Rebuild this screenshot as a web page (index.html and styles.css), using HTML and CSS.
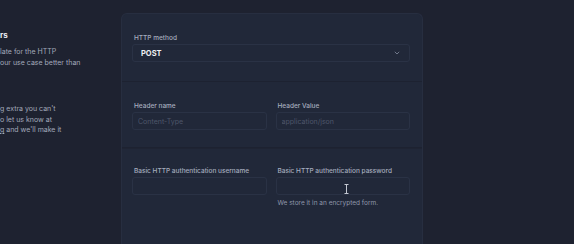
FILE: index.html
```html
<!DOCTYPE html>
<html lang="en">
<head>
    <meta charset="UTF-8">
    <meta name="viewport" content="width=device-width, initial-scale=1.0">
    <title>Webhook settings</title>
    <link rel="stylesheet" href="styles.css">
</head>
<body>

<div class="page">
    <div class="intro">
        <h3 class="intro-title">rs</h3>
        <p class="intro-text">
            <span class="line">late for the HTTP</span>
            <span class="line shift">our use case better than</span>
        </p>
        <p class="intro-text second">
            <span class="line">g extra you can't</span>
            <span class="line">o let us know at</span>
            <span class="line"><a class="mail" href="#">g</a> and we'll make it</span>
        </p>
    </div>

    <div class="panel">
        <div class="section first">
            <label class="field-label">HTTP method</label>
            <div class="select">
                <span class="select-value">POST</span>
                <svg class="chevron" width="6" height="4" viewBox="0 0 6 4">
                    <path d="M0.8 0.8 L3 3 L5.2 0.8" fill="none" stroke="#6f778a" stroke-width="1"/>
                </svg>
            </div>
        </div>

        <div class="section">
            <div class="row">
                <div class="field">
                    <label class="field-label">Header name</label>
                    <input class="input" type="text" placeholder="Content-Type">
                </div>
                <div class="field">
                    <label class="field-label">Header Value</label>
                    <input class="input" type="text" placeholder="application/json">
                </div>
            </div>
        </div>

        <div class="section last">
            <div class="row">
                <div class="field">
                    <label class="field-label">Basic HTTP authentication username</label>
                    <input class="input" type="text">
                </div>
                <div class="field">
                    <label class="field-label">Basic HTTP authentication password</label>
                    <div class="input-wrap">
                        <input class="input" type="password">
                        <svg class="ibeam" width="5" height="10" viewBox="0 0 5 10">
                            <path d="M0.5 0.5 H4.5 M2.5 0.5 V9.5 M0.5 9.5 H4.5" fill="none" stroke="#c3c7d1" stroke-width="1"/>
                        </svg>
                    </div>
                    <p class="hint">We store it in an encrypted form.</p>
                </div>
            </div>
        </div>
    </div>
</div>

</body>
</html>
```

FILE: styles.css
```css
body {
    margin: 0;
    background-color: #1e2230;
    font-family: Inter, "Noto Sans", sans-serif;
    overflow: hidden;
}
.page {
    display: flex;
    height: 244px;
}
.intro {
    flex: 0 0 121px;
    overflow: hidden;
    color: #a2a9ba;
    font-size: 7px;
    line-height: 11px;
    white-space: nowrap;
}
.intro-title {
    margin: 29px 0 0 0;
    font-size: 8px;
    line-height: 12px;
    font-weight: 700;
    color: #eceef3;
}
.intro-text {
    margin: 5px 0 0 0;
}
.intro-text.second {
    margin-top: 36px;
    line-height: 10.5px;
}
.line {
    display: block;
}
.mail {
    color: #a2a9ba;
}
.panel {
    flex: 0 0 302px;
    margin-top: 13px;
    background-color: #212839;
    border: 1px solid #272e40;
    border-bottom: none;
    border-radius: 6px 6px 0 0;
    box-sizing: border-box;
}
.section {
    padding: 19px 12px 17px 10px;
    border-bottom: 1px solid #1d2231;
}
.section.first {
    padding-top: 19px;
    padding-bottom: 19px;
}
.section.last {
    border-bottom: none;
    border-top: 1px solid #1f2433;
    padding-top: 17px;
}
.field-label {
    display: block;
    font-size: 6.5px;
    line-height: 10px;
    font-weight: 500;
    color: #a6adbf;
    padding-left: 2px;
    margin-bottom: 1px;
}
.select {
    display: flex;
    align-items: center;
    justify-content: space-between;
    height: 18px;
    box-sizing: border-box;
    border: 1px solid #2a3245;
    border-radius: 3px;
    padding: 0 9px 0 8px;
}
.select-value {
    font-size: 7.5px;
    font-weight: 700;
    color: #eef0f4;
}
.row {
    display: flex;
    gap: 9px;
}
.field {
    flex: 1;
    min-width: 0;
}
.input-wrap {
    position: relative;
}
.input {
    display: block;
    width: 100%;
    height: 18px;
    box-sizing: border-box;
    background: transparent;
    border: 1px solid #2a3245;
    border-radius: 3px;
    padding: 0 5px;
    font-family: Inter, "Noto Sans", sans-serif;
    font-size: 7px;
    color: #d0d4dd;
    outline: none;
}
.input::placeholder {
    color: #4e566a;
}
.ibeam {
    position: absolute;
    left: 68px;
    top: 7px;
}
.hint {
    margin: 3px 0 0 2px;
    font-size: 6.5px;
    line-height: 10px;
    color: #8f97aa;
}
```
